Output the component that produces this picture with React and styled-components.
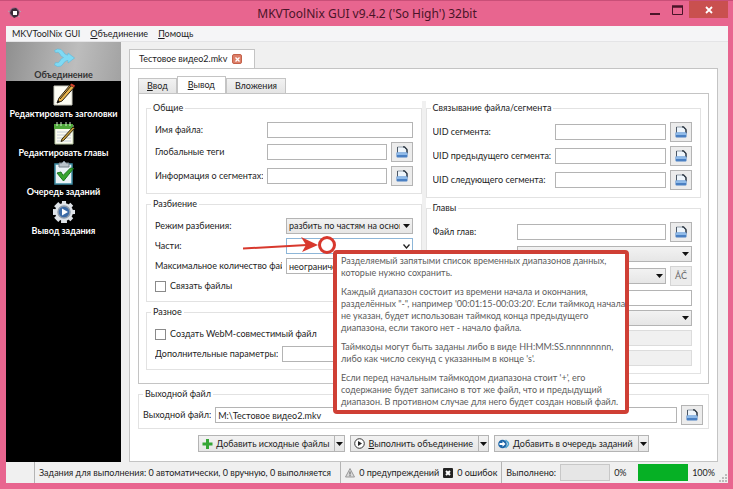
import { useId } from "react";
import styled, { createGlobalStyle, css } from "styled-components";

const modules = [
  { id: "merge", title: "Объединение", icon: <MergeIcon /> },
  { id: "headers", title: "Редактировать заголовки", icon: <HeaderIcon /> },
  { id: "chapters", title: "Редактировать главы", icon: <ChaptersIcon /> },
  { id: "queue", title: "Очередь заданий", icon: <QueueIcon /> },
  { id: "output", title: "Вывод задания", icon: <GearIcon /> },
];

const tooltipText = [
  ["Разделяемый запятыми список временных диапазонов данных,", "которые нужно сохранить."],
  [
    "Каждый диапазон состоит из времени начала и окончания,",
    "разделённых \"-\", например '00:01:15-00:03:20'. Если таймкод начала",
    "не указан, будет использован таймкод конца предыдущего",
    "диапазона, если такого нет - начало файла.",
  ],
  ["Таймкоды могут быть заданы либо в виде HH:MM:SS.nnnnnnnnn,", "либо как число секунд с указанным в конце 's'."],
  [
    "Если перед начальным таймкодом диапазона стоит '+', его",
    "содержание будет записано в тот же файл, что и предыдущий",
    "диапазон. В противном случае для него будет создан новый файл.",
  ],
];

function MergeIcon() {
  return (
    <svg width="22" height="20" viewBox="0 0 22 20">
      <path
        d="M1.500 2.500l3-1.500q4-.5 5.500 2.500 1.500 3 4 3.500h1V5l6.500 5-6.500 5v-2.500h-1q-2.500.5-4 3.500-1.500 3-5.500 2.500l-3-1.500 1-2.500q3 1 4-1 1.500-3.500 4-4-2.500-.5-4-4-1-2-4-1z"
        fill="#7fdaf4"
        stroke="#5cb9da"
        strokeWidth=".6"
      />
    </svg>
  );
}

function HeaderIcon() {
  return (
    <svg width="24" height="24" viewBox="0 0 24 24">
      <path d="M2 3h18v19H2z" fill="#fdfdf4" stroke="#c9c9bd" />
      <path d="M5 20l2-5L18 2l4 2.500L10 18z" fill="#e8b44a" stroke="#2a2013" />
      <path d="M8 16L19 3" stroke="#2a2013" />
      <path d="M18 2l1.500-1.500L23 2.500 22 4.500z" fill="#d5432d" />
      <path d="M5 20l1-3 2 1.500z" fill="#111" />
    </svg>
  );
}

function ChaptersIcon() {
  return (
    <svg width="24" height="24" viewBox="0 0 24 24">
      <path d="M3 3h18v19H3z" fill="#fbfbef" stroke="#b9c9a4" />
      <path d="M2 2h19v5H2z" fill="#4fa83a" />
      <path d="M5 0v4M9 0v4M14 0v4M18 0v4" stroke="#d8efcf" />
      <path d="M5 10h14M5 13h14M5 16h14M5 19h14" stroke="#c3ccd6" />
      <path d="M9 19.500l1-2.500L21 5l1.500 1.500L11.500 18.500z" fill="#c9a23f" stroke="#30260f" />
    </svg>
  );
}

function QueueIcon() {
  return (
    <svg width="22" height="24" viewBox="0 0 22 24">
      <path d="M2 3h17v20H2z" fill="#eaf3f7" stroke="#3b8ba3" strokeWidth="1.500" />
      <path d="M6 2h3l2-2 2 2h3v4H6z" fill="#b9c3ca" stroke="#74828b" />
      <path d="M4 12l4-1 2 3.500L17.500 7l3 .5-10 12.500z" fill="#35a52f" stroke="#1c7420" />
    </svg>
  );
}

function GearIcon() {
  return (
    <svg width="24" height="24" viewBox="0 0 24 24">
      {[0, 45, 90, 135].map((angle) => (
        <path key={angle} d="M10 1h4l1 22H9z" fill="#dfe3e8" transform={`rotate(${angle} 12 12)`} />
      ))}
      <circle cx="12" cy="12" r="9" fill="#dfe3e8" />
      <circle cx="12" cy="12" r="6" fill="#3b6aa6" stroke="#8b99aa" strokeWidth="1.500" />
      <path d="M10 8.500l6 3.500-6 3.500z" fill="#fff" />
    </svg>
  );
}

function BrowseIcon() {
  return (
    <svg width="12" height="12" viewBox="0 0 12 12">
      <path d="M1.500 1H8l3 3v4H1.500z" fill="#eef5fb" stroke="#7f8c9a" strokeWidth=".8" />
      <path d="M1.500 7V1" stroke="#4a5664" />
      <path d="M7 .8h1.500L11 3.500V7" fill="none" stroke="#26313d" strokeWidth="1.300" />
      <path d="M.5 6.500h11v4q0 1-1 1h-9q-1 0-1-1z" fill="#4a80c3" />
      <path d="M1 6.500h10V9H1z" fill="#8fbae8" />
    </svg>
  );
}

const Caret = () => (
  <svg width="7" height="4" viewBox="0 0 7 4">
    <path d="M0 0h7L3.500 4z" fill="#111" />
  </svg>
);

const Chevron = () => (
  <svg width="7" height="5" viewBox="0 0 7 5">
    <path d="M.5.5l3 3.500 3-3.500" fill="none" stroke="#222" strokeWidth="1.300" />
  </svg>
);

const PickButton = ({ label = "Выбрать файл" }) => (
  <ToolButton type="button" aria-label={label}>
    <BrowseIcon />
  </ToolButton>
);

const TextRow = ({ label, labelWidth, browse, value, disabled, ariaLabel }) => {
  const id = useId();
  return (
    <Row>
      <Label htmlFor={id} $width={labelWidth}>
        {label}
      </Label>
      <Input id={id} defaultValue={value} disabled={disabled} aria-label={ariaLabel} />
      {browse && <PickButton />}
    </Row>
  );
};

const SelectRow = ({ label, labelWidth, options = [], editable, ariaLabel, children, after }) => {
  const id = useId();
  return (
    <Row>
      <Label htmlFor={id} $width={labelWidth}>
        {label}
      </Label>
      <SelectBox>
        <Select id={id} $editable={editable} aria-label={ariaLabel}>
          {options.map((item) => (
            <option key={item}>{item}</option>
          ))}
        </Select>
        <Arrow>{editable ? <Chevron /> : <Caret />}</Arrow>
        {children}
      </SelectBox>
      {after}
    </Row>
  );
};

const SplitButton = ({ icon, text, hotkey }) => (
  <Split>
    <SplitMain type="button">
      {icon}
      <span>
        {hotkey && <u>{text[0]}</u>}
        {hotkey ? text.slice(1) : text}
      </span>
    </SplitMain>
    <SplitMenu type="button" aria-label={`${text}: меню`}>
      <Caret />
    </SplitMenu>
  </Split>
);

const PartsHint = () => (
  <>
    <Pointer width="96" height="22" viewBox="0 0 96 22">
      <path d="M2 13.500L66 10" stroke="#d8382d" strokeWidth="2" />
      <path d="M60 2l17 8-16 7 4-7z" fill="#d8382d" />
      <circle cx="86" cy="10" r="7.500" fill="none" stroke="#d8382d" strokeWidth="3" />
    </Pointer>
    <Tooltip role="tooltip">
      {tooltipText.map((lines) => (
        <p key={lines[0]}>
          {lines.map((line) => (
            <span key={line}>{line}</span>
          ))}
        </p>
      ))}
    </Tooltip>
  </>
);

const App = () => {
  return (
    <Window>
      <GlobalStyle />
      <TitleBar>
        <AppLogo width="13" height="13" viewBox="0 0 13 13">
          <path d="M0 5l2 1M11 4l2 2M10 10l2 1" stroke="#b7a3b3" />
          <circle cx="6.500" cy="6.500" r="5" fill="#8b6580" />
          <path d="M2 7l2-4 4-1 3 4-1 4-4 2z" fill="#3a2a38" />
          <path d="M5 5h4v4H5z" fill="#fff" />
        </AppLogo>
        <Title>MKVToolNix GUI v9.4.2 ('So High') 32bit</Title>
        <WindowButton type="button" aria-label="Свернуть">
          <svg width="10" height="10" viewBox="0 0 10 10">
            <path d="M0 9h10" stroke="#4a1428" strokeWidth="2" />
          </svg>
        </WindowButton>
        <WindowButton type="button" aria-label="Развернуть">
          <svg width="11" height="10" viewBox="0 0 11 10">
            <path d="M.5 1.500h10v8H.5z" fill="none" stroke="#4a1428" />
            <path d="M0 1.500h11" stroke="#4a1428" strokeWidth="2.500" />
          </svg>
        </WindowButton>
        <WindowButton type="button" $close aria-label="Закрыть">
          <svg width="8" height="8" viewBox="0 0 8 8">
            <path d="M1 1l6 6M7 1L1 7" stroke="#fff" strokeWidth="1.800" />
          </svg>
        </WindowButton>
      </TitleBar>

      <MenuBar>
        <MenuItem type="button">MKVToolNix GUI</MenuItem>
        <MenuItem type="button">
          <u>О</u>бъединение
        </MenuItem>
        <MenuItem type="button">
          <u>П</u>омощь
        </MenuItem>
      </MenuBar>

      <Body>
        <Sidebar>
          {modules.map((item, index) => (
            <ModuleButton key={item.id} type="button" $active={index === 0}>
              {item.icon}
              {item.title}
            </ModuleButton>
          ))}
        </Sidebar>

        <Workspace>
          <FileTab>
            Тестовое видео2.mkv
            <CloseTab type="button" aria-label="Закрыть вкладку">
              <svg width="5" height="5" viewBox="0 0 5 5">
                <path d="M.5.5l4 4M4.500.5l-4 4" stroke="#fff" strokeWidth="1.300" />
              </svg>
            </CloseTab>
          </FileTab>

          <FilePane>
            <Tabs>
              <Tab type="button">
                <u>В</u>вод
              </Tab>
              <Tab type="button" $active>
                <u>В</u>ывод
              </Tab>
              <Tab type="button">Вложения</Tab>
            </Tabs>

            <TabPane>
              <Column>
                <Group>
                  <legend>Общие</legend>
                  <TextRow label="Имя файла:" labelWidth={108} />
                  <TextRow label="Глобальные теги" labelWidth={108} browse />
                  <TextRow label="Информация о сегментах:" labelWidth={108} browse />
                </Group>
                <Group>
                  <legend>Разбиение</legend>
                  <SelectRow
                    label="Режим разбиения:"
                    labelWidth={127}
                    options={["разбить по частям на основе таймкодов"]}
                  />
                  <SelectRow label="Части:" labelWidth={127} editable>
                    <PartsHint />
                  </SelectRow>
                  <TextRow label="Максимальное количество файлов:" labelWidth={127} value="неограничено" />
                  <Check>
                    <input type="checkbox" />
                    Связать файлы
                  </Check>
                </Group>
                <Group>
                  <legend>Разное</legend>
                  <Check>
                    <input type="checkbox" />
                    Создать WebM-совместимый файл
                  </Check>
                  <TextRow label="Дополнительные параметры:" />
                </Group>
              </Column>

              <Splitter />

              <Column>
                <Group $tight>
                  <legend>Связывание файла/сегмента</legend>
                  <TextRow label="UID сегмента:" labelWidth={118} browse />
                  <TextRow label="UID предыдущего сегмента:" labelWidth={118} browse />
                  <TextRow label="UID следующего сегмента:" labelWidth={118} browse />
                </Group>
                <Group $tight>
                  <legend>Главы</legend>
                  <TextRow label="Файл глав:" labelWidth={80} browse />
                  <SelectRow labelWidth={80} ariaLabel="Язык" />
                  <SelectRow
                    labelWidth={80}
                    ariaLabel="Кодировка"
                    after={
                      <ToolButton type="button" disabled>
                        ÅČ
                      </ToolButton>
                    }
                  />
                  <TextRow labelWidth={80} ariaLabel="Формат имени" />
                  <SelectRow labelWidth={80} ariaLabel="Создание глав" />
                  <TextRow labelWidth={80} ariaLabel="Шаблон имени" disabled />
                  <TextRow labelWidth={80} ariaLabel="Интервал" disabled />
                </Group>
              </Column>
            </TabPane>

            <OutputGroup>
              <legend>Выходной файл</legend>
              <TextRow label="Выходной файл:" value="M:\Тестовое видео2.mkv" browse />
            </OutputGroup>

            <Actions>
              <SplitButton
                hotkey
                text="Добавить исходные файлы"
                icon={
                  <svg width="11" height="10" viewBox="0 0 11 10">
                    <path d="M4 0h3v3.500h3.500v3H7V10H4V6.500H.5v-3H4z" fill="#35a535" />
                  </svg>
                }
              />
              <SplitButton
                hotkey
                text="Выполнить объединение"
                icon={
                  <svg width="11" height="11" viewBox="0 0 11 11">
                    <circle cx="5.500" cy="5.500" r="4.800" fill="#fff" stroke="#333" />
                    <path d="M4 3l4 2.500L4 8z" fill="#222" />
                  </svg>
                }
              />
              <SplitButton
                text="Добавить в очередь заданий"
                icon={
                  <svg width="12" height="10" viewBox="0 0 12 10">
                    <path d="M7.500 1.200q6 3.800 0 7.600" fill="none" stroke="#4aa3d0" strokeWidth="1.500" />
                    <circle cx="4.500" cy="5" r="4.300" fill="#1c66a8" />
                    <path d="M1.500 4h3V2.200L7.500 5 4.500 7.800V6h-3z" fill="#fff" />
                  </svg>
                }
              />
            </Actions>
          </FilePane>
        </Workspace>
      </Body>

      <StatusBar>
        <StatusCell $first />
        <StatusCell $grow>Задания для выполнения: 0 автоматически, 0 вручную, 0 выполняется</StatusCell>
        <StatusCell>
          <svg width="10" height="10" viewBox="0 0 10 10">
            <path d="M5 .5l4.500 8.500h-9z" fill="#d9d9d9" stroke="#999" />
            <path d="M5 3.500v3M5 7.200v1" stroke="#555" />
          </svg>
          0 предупреждений
          <svg width="10" height="10" viewBox="0 0 10 10">
            <rect width="10" height="10" rx="1" fill="#222" />
            <path d="M3 3l4 4M7 3L3 7" stroke="#fff" strokeWidth="2" />
          </svg>
          0 ошибок
        </StatusCell>
        <StatusCell>
          Выполнено:
          <Progress role="progressbar" aria-valuenow={0} aria-label="Текущее задание" />
          <Percent>0%</Percent>
          <Progress role="progressbar" aria-valuenow={100} aria-label="Все задания" $full />
          100%
        </StatusCell>
        <svg width="9" height="9" viewBox="0 0 9 9">
          <path d="M6 1h2M3 4h2M6 4h2M0 7h2M3 7h2M6 7h2" stroke="#bbb" strokeWidth="2" />
        </svg>
      </StatusBar>
    </Window>
  );
};

const GlobalStyle = createGlobalStyle`
  * {
    box-sizing: border-box;
  }

  body {
    margin: 0;
    background: #e8658f;
  }

  button,
  input,
  select {
    margin: 0;
    padding: 0;
    font: inherit;
    color: inherit;
    border-radius: 0;
    outline: none;
  }

  svg {
    display: block;
    flex: none;
  }
`;

const fieldBorder = css`
  border: 1px solid #b4b4b4;
`;

const Window = styled.div`
  display: flex;
  flex-direction: column;
  min-height: 100vh;
  padding: 0 5px 6px 6px;
  border-top: 1px solid #c94f78;
  background: #e8658f;
  color: #1c1c1c;
  font-family: Lato, "Noto Sans", sans-serif;
  font-size: 9px;
  line-height: 14px;
`;

const TitleBar = styled.header`
  display: flex;
  align-items: flex-start;
  height: 25px;
`;

const AppLogo = styled.svg`
  margin: 5px 0 0 2px;
`;

const Title = styled.h1`
  flex: 1;
  margin: 0;
  padding-left: 70px;
  color: #4a1428;
  font-family: "Noto Sans", sans-serif;
  font-size: 12px;
  font-weight: 400;
  line-height: 25px;
  text-align: center;
`;

const WindowButton = styled.button`
  display: flex;
  align-items: center;
  justify-content: center;
  width: ${({ $close }) => ($close ? 39 : 23)}px;
  height: 17px;
  border: 0;
  background: ${({ $close }) => ($close ? "#c9504f" : "transparent")};
`;

const MenuBar = styled.nav`
  display: flex;
  gap: 10px;
  height: 16px;
  padding: 0 6px;
  border-bottom: 1px solid #e4e4e6;
  background: #f5f5f7;
`;

const MenuItem = styled.button`
  border: 0;
  background: none;
`;

const Body = styled.div`
  display: flex;
  flex: 1;
  background: #f0f0f0;
`;

const Sidebar = styled.aside`
  width: 115px;
  flex: none;
  background: #000;
`;

const ModuleButton = styled.button`
  display: flex;
  flex-direction: column;
  align-items: center;
  justify-content: flex-end;
  width: 100%;
  height: 39px;
  border: 0;
  background: ${({ $active }) => ($active ? "linear-gradient(100deg, #8f8f8f, #bdbdbd 60%, #a2a2a2)" : "none")};
  color: ${({ $active }) => ($active ? "#333" : "#fff")};
  font-weight: 700;
  line-height: 13px;
  white-space: nowrap;
`;

const Workspace = styled.main`
  display: flex;
  flex: 1;
  flex-direction: column;
  align-items: flex-start;
  min-width: 0;
  padding: 7px 10px 0 8px;
`;

const FileTab = styled.div`
  display: flex;
  align-items: center;
  gap: 5px;
  height: 19px;
  padding: 0 12px 0 9px;
  border: 1px solid #c4c4c4;
  border-bottom: 0;
  background: #fff;
`;

const CloseTab = styled.button`
  display: flex;
  align-items: center;
  justify-content: center;
  width: 10px;
  height: 10px;
  border: 1px solid #c4614a;
  border-radius: 2px;
  background: #dd7f68;
`;

const FilePane = styled.section`
  display: flex;
  flex: 1;
  flex-direction: column;
  align-self: stretch;
  padding: 7px 8px 9px;
  border: 1px solid #c4c4c4;
  background: #fff;
`;

const Tabs = styled.div`
  display: flex;
  align-items: flex-end;
`;

const Tab = styled.button`
  height: ${({ $active }) => ($active ? 17 : 15)}px;
  padding: 0 ${({ $active }) => ($active ? 10 : 8)}px;
  border: 1px solid #c4c4c4;
  border-bottom: 0;
  background: ${({ $active }) => ($active ? "#fff" : "linear-gradient(#f2f2f2, #e4e4e4)")};
`;

const TabPane = styled.div`
  display: grid;
  grid-template-columns: minmax(0, 1fr) 4px minmax(0, 1fr);
  padding: 7px 7px 9px;
  border: 1px solid #c4c4c4;
`;

const Column = styled.div`
  display: flex;
  flex-direction: column;
  gap: 3px;
`;

const Splitter = styled.div`
  background: #f0f0f0;
`;

const Group = styled.fieldset`
  display: flex;
  flex-direction: column;
  gap: 4px;
  min-width: 0;
  margin: 0;
  padding: 7px 8px 7px ${({ $tight }) => ($tight ? 6 : 8)}px;
  border: 1px solid #e2e2e2;

  legend {
    margin-left: ${({ $tight }) => ($tight ? -2 : -4)}px;
    padding: 0 2px;
  }
`;

const OutputGroup = styled(Group)`
  margin-top: 3px;
  padding: 4px 5px 3px 4px;

  legend {
    margin-left: 0;
  }
`;

const Row = styled.div`
  display: flex;
  align-items: center;
  gap: 4px;
`;

const Label = styled.label`
  flex: none;
  width: ${({ $width }) => ($width ? `${$width}px` : "auto")};
  overflow: hidden;
  white-space: nowrap;
`;

const Input = styled.input`
  ${fieldBorder}
  flex: 1;
  min-width: 0;
  height: 16px;
  padding: 0 2px;
  background: #fff;

  &:disabled {
    border-color: #dcdcdc;
    background: #f0f0f0;
  }
`;

const SelectBox = styled.div`
  position: relative;
  flex: 1;
  min-width: 0;
`;

const Select = styled.select`
  ${fieldBorder}
  display: block;
  width: 100%;
  height: 16px;
  padding: 0 12px 0 2px;
  border-color: ${({ $editable }) => ($editable ? "#8db6d8" : "#b4b4b4")};
  background: ${({ $editable }) => ($editable ? "#fff" : "linear-gradient(#f2f2f2, #e6e6e6)")};
  appearance: none;
`;

const Arrow = styled.span`
  position: absolute;
  top: 6px;
  right: 3px;
  pointer-events: none;
`;

const ToolButton = styled.button`
  ${fieldBorder}
  display: flex;
  align-items: center;
  justify-content: center;
  width: 22px;
  height: 20px;
  background: #ececec;

  &:disabled {
    border-color: #d4d4d4;
    color: #666;
  }
`;

const Check = styled.label`
  display: flex;
  align-items: center;
  gap: 4px;
  height: 16px;

  input {
    ${fieldBorder}
    width: 11px;
    height: 11px;
    border-color: #8a8a8a;
    background: #fff;
    appearance: none;
  }
`;

const Pointer = styled.svg`
  position: absolute;
  z-index: 2;
  top: -3px;
  left: -45px;
  pointer-events: none;
`;

const Tooltip = styled.div`
  position: absolute;
  z-index: 1;
  top: 12px;
  left: 47px;
  display: flex;
  flex-direction: column;
  gap: 7px;
  padding: 1px 0 2px 4px;
  border: 4px solid #cf3f35;
  border-radius: 4px;
  background: #fff;
  color: #5c5c5c;
  line-height: 12px;
  white-space: nowrap;

  p {
    margin: 0;
  }

  span {
    display: block;
  }
`;

const Actions = styled.div`
  display: flex;
  justify-content: center;
  gap: 5px;
  margin-top: auto;
`;

const Split = styled.div`
  ${fieldBorder}
  display: flex;
  height: 17px;
  background: linear-gradient(#f2f2f2, #e6e6e6);
`;

const SplitMain = styled.button`
  display: flex;
  align-items: center;
  gap: 3px;
  padding: 0 5px 0 3px;
  border: 0;
  background: none;
`;

const SplitMenu = styled.button`
  display: flex;
  align-items: center;
  padding: 0 1px;
  border: 0;
  border-left: 1px solid #b4b4b4;
  background: none;
`;

const StatusBar = styled.footer`
  display: flex;
  align-items: flex-end;
  height: 21px;
  background: #f0f0f0;
`;

const StatusCell = styled.div`
  display: flex;
  align-items: center;
  align-self: stretch;
  gap: 4px;
  width: ${({ $first }) => ($first ? "28px" : "auto")};
  flex: ${({ $grow }) => ($grow ? "1" : "none")};
  padding: 0 4px;
  border-left: ${({ $first }) => ($first ? "0" : "1px solid #b4b4b4")};
  white-space: nowrap;
`;

const Progress = styled.div`
  width: 50px;
  height: 17px;
  border: 1px solid ${({ $full }) => ($full ? "#06b025" : "#c8c8c8")};
  background: ${({ $full }) => ($full ? "#06b025" : "#e6e6e6")};
`;

const Percent = styled.span`
  width: 20px;
`;

export default App;
